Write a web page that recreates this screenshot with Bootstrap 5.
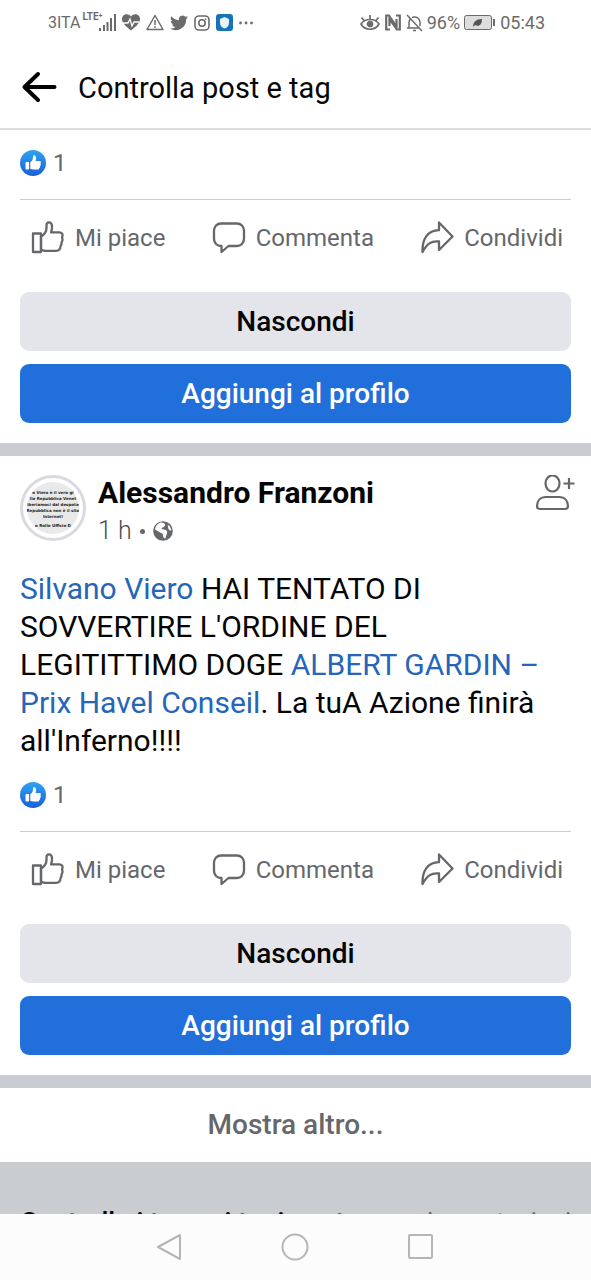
<!DOCTYPE html>
<html lang="it">
<head>
<meta charset="utf-8">
<meta name="viewport" content="width=device-width, initial-scale=1">
<title>Controlla post e tag</title>
<link rel="stylesheet" href="https://cdn.jsdelivr.net/npm/bootstrap@5.3.0/dist/css/bootstrap.min.css">
<style>
  body { font-family: Roboto, "Liberation Sans", sans-serif; color: #050505; background: #fff; }
  svg { display: block; flex: none; }
  .status-bar { height: 45px; font-size: 18px; line-height: 24px; color: #6b6b6b; padding: 0 46px 0 48px; }
  .status-icons { gap: 6px; }
  .status-name { font-size: 16px; }
  .status-lte { font-size: 10px; line-height: 12px; font-weight: 700; margin: 0 -4px 0 2px; }
  .title-bar { height: 85px; padding: 0 20px; gap: 20px; border-bottom: 2px solid #dcdde0; }
  .title-bar h1 { font-size: 29px; line-height: 36px; font-weight: 400; padding-top: 2px; }
  .icon-btn { background: none; border: 0; padding: 0; color: inherit; }
  .post { padding: 0 20px 20px; }
  .post-head { padding-top: 19px; margin-right: -4px; }
  .avatar-ring { width: 66px; height: 66px; border: 3px solid #d8dae0; padding: 4px; margin-right: 12px; }
  .author { font-size: 30px; line-height: 36px; font-weight: 700; color: #050505; text-decoration: none; }
  .meta { font-size: 25px; line-height: 32px; font-weight: 300; color: #4b4d51; gap: 8px; margin-top: 4px; }
  .meta-dot { width: 5px; height: 5px; background: #65676b; }
  .post-text { font-size: 30px; line-height: 38px; margin: 23px 0 2px; padding-right: 16px; }
  .post-text a { color: #2566b8; text-decoration: none; }
  .reactions { height: 70px; gap: 7px; font-size: 24px; line-height: 28px; color: #65676b; border-bottom: 1px solid #cbccd0; padding-bottom: 4px; }
  .post-actions { height: 92px; padding: 0 8px 16px 11px; }
  .post-actions button { font-size: 24px; line-height: 32px; color: #65676b; gap: 10px; }
  .button-stack { gap: 13px; }
  .btn-wide { height: 59px; border: 0; border-radius: 9px; font-size: 28px; line-height: 36px; font-weight: 500; padding: 0; }
  .btn-hide { --bs-btn-bg: #e4e5eb; --bs-btn-color: #050505; }
  .btn-add { --bs-btn-bg: #216fdb; --bs-btn-color: #fff; }
  .gap-bar { height: 13px; background: #c9ccd1; }
  .more { height: 74px; font-size: 28px; line-height: 36px; font-weight: 500; color: #65676b; }
  .next-section { height: 52px; background: #c9ccd1; padding: 43px 20px 0; overflow: hidden; line-height: 36px; white-space: nowrap; }
  .next-section h2 { font-size: 27px; line-height: 36px; font-weight: 500; margin: 0; }
  .next-section a { font-size: 25px; color: #65676b; text-decoration: none; }
  .system-nav { height: 66px; background: #fcfcfc; padding: 0 156px; color: #b5b5b5; }
</style>
</head>
<body>
<svg width="0" height="0" class="position-absolute" aria-hidden="true">
  <defs>
    <linearGradient id="blue" x1="0" y1="0" x2="0" y2="1"><stop offset="0" stop-color="#2ea2f3"/><stop offset="1" stop-color="#1a5fd8"/></linearGradient>
    <symbol id="reaction" viewBox="0 0 26 26">
      <circle cx="13" cy="13" r="13" fill="url(#blue)"/>
      <rect x="5.500" y="12" width="3.600" height="7.500" rx="1" fill="#fff"/>
      <path d="M10.300 12.300c1.800-1.200 2.600-2.700 2.600-4.800 0-1.800.5-2.300 1.300-2.300 1.600 0 2.200 1.700 1.700 4.300l-.3 1.600h3.600c2 0 2.100 1.800 1.200 2.500.8.900.5 2-.3 2.400.3 1-.2 1.700-.9 2 .1 1-.6 1.500-1.700 1.500h-3.700c-1.400 0-2.500-.3-3.500-.8z" fill="#fff"/>
    </symbol>
    <symbol id="like" viewBox="0 1.500 34 34"><g fill="none" stroke="#65676b" stroke-width="2.300" stroke-linejoin="round">
      <path d="M2 14h8v18.500H2z"/><path d="M10 17c3.500-2 5.500-5 5.500-8.500V6c0-4 4.500-4.200 5.300-.5.700 3-.1 5-.7 7.300h8.400c2.500 0 3.600 2 2.800 4-.3.900-.3 1.400 0 2.200.5 1.500 0 2.900-.8 3.900.3 1.400 0 2.500-.9 3.600-.2 2.700-1.700 4.800-4.500 4.800H14l-4-1z"/></g>
    </symbol>
    <symbol id="comment" viewBox="0 0.500 34 34"><path d="M9 3h16a7 7 0 0 1 7 7v8.500a7 7 0 0 1-7 7h-8.500L9.500 31.500v-6H9a7 7 0 0 1-7-7V10a7 7 0 0 1 7-7z" fill="none" stroke="#65676b" stroke-width="2.300" stroke-linejoin="round"/></symbol>
    <symbol id="share" viewBox="0 1 34 34"><path d="M19 2.500 32.500 16.500 19 30v-8.500c-8-.8-12 2.300-16.500 10.500C2 19 7.500 10.500 19 10.200z" fill="none" stroke="#65676b" stroke-width="2.300" stroke-linejoin="round"/></symbol>
  </defs>
</svg>

<div class="vh-100 d-flex flex-column overflow-hidden">
  <div class="status-bar d-flex align-items-center justify-content-between flex-shrink-0">
    <div class="status-icons d-flex align-items-center">
      <div class="d-flex align-items-center">
        <span class="status-name">3ITA</span>
        <span class="status-lte align-self-start">LTE⁺</span>
        <svg width="17" height="17" viewBox="0 0 17 17" fill="#6b6b6b"><path d="M0 14h2v3H0zM4 11h2v6H4zM7.500 8h2v9h-2zM11 4h2v13h-2zM15 0h2v17h-2z"/></svg>
      </div>
      <svg width="18" height="17" viewBox="0 0 18 17"><path d="M9 16.500C4 12.500 0 9 0 5c0-5 6-6.500 9-2.500C12 -1.500 18 0 18 5c0 4-4 7.500-9 11.500z" fill="#6b6b6b"/><path d="M1 9h5l2-4 2 7 2-4h5" fill="none" stroke="#fff" stroke-width="1.300"/></svg>
      <svg width="18" height="17" viewBox="0 0 18 17" fill="none" stroke="#6b6b6b" stroke-width="1.500"><path d="M9 1.500 17 15.500H1zM9 6v5M9 12.300v1.700" stroke-linejoin="round"/></svg>
      <svg width="18" height="16" viewBox="0 0 24 20" fill="#6b6b6b"><path d="M24 2.400c-.9.400-1.800.7-2.800.8 1-.6 1.800-1.600 2.200-2.700-1 .6-2 1-3.100 1.200A4.900 4.900 0 0 0 11.900 6.200C7.800 6 4.200 4 1.700.9c-1.300 2.200-.7 5.100 1.500 6.600-.8 0-1.600-.2-2.200-.6 0 2.300 1.600 4.400 3.900 4.900-.7.200-1.500.2-2.200.1.600 2 2.400 3.400 4.600 3.400A9.900 9.900 0 0 1 0 17.300a14 14 0 0 0 21.500-12.400c1-.7 1.800-1.600 2.500-2.500z"/></svg>
      <svg width="16" height="16" viewBox="0 0 16 16" fill="none" stroke="#6b6b6b" stroke-width="1.600"><rect x="1" y="1" width="14" height="14" rx="4"/><circle cx="8" cy="8" r="3.200"/><path d="M11.700 3.500v1.400"/></svg>
      <svg width="17" height="17" viewBox="0 0 17 17"><rect width="17" height="17" rx="3" fill="#1673b8"/><path d="M8.500 3 13 5v4c0 3-2 4.500-4.500 5.500C6 13.500 4 12 4 9V5z" fill="#e5f3fc"/></svg>
      <svg width="14" height="4" viewBox="0 0 14 4" fill="#6b6b6b"><circle cx="1.500" cy="2" r="1.400"/><circle cx="7" cy="2" r="1.400"/><circle cx="12.500" cy="2" r="1.400"/></svg>
    </div>
    <div class="d-flex align-items-center gap-1">
      <svg width="20" height="17" viewBox="0 0 20 17" fill="none" stroke="#6b6b6b" stroke-width="1.700"><path d="M1 10c4-6 14-6 18 0-4 7-14 7-18 0zM1.500 3.500l2.500 3M10 1v4M18.500 3.500l-2.500 3"/><circle cx="10" cy="10" r="2.500" fill="#6b6b6b"/></svg>
      <svg width="18" height="17" viewBox="0 0 18 17" fill="none" stroke="#6b6b6b" stroke-width="2.200"><path d="M6 15.500H2.200V1.500H5l7.500 11V5M12 1.500h3.800v14H13L5.500 5v7"/></svg>
      <svg width="17" height="18" viewBox="0 0 17 18" fill="none" stroke="#6b6b6b" stroke-width="1.500"><path d="M1 1l15 16M1 14h12M3 14V8l1-3M6 3.500C11 2 14 5 14 8v4M7 16.500h3"/></svg>
      <span>96%</span>
      <svg width="32" height="15" viewBox="0 0 32 15"><rect x=".5" y=".5" width="27" height="14" rx="2" fill="#ddd" stroke="#6b6b6b"/><path d="M30 4v7" stroke="#6b6b6b" stroke-width="2"/><path d="M9 12c0-5 3-8 9-8 0 6-3 8-7 6z" fill="#555"/></svg>
      <span>05:43</span>
    </div>
  </div>

  <header class="title-bar d-flex align-items-center flex-shrink-0">
    <button class="icon-btn" type="button" aria-label="Indietro"><svg width="38" height="32" viewBox="0 0 38 32" fill="none" stroke="#000" stroke-width="4" stroke-linecap="round" stroke-linejoin="round"><path d="M18 3 4.500 16 18 29M4.500 16H34.500"/></svg></button>
    <h1 class="m-0">Controlla post e tag</h1>
  </header>

  <main class="flex-grow-1 overflow-hidden">
    <article class="post">
      <div class="reactions d-flex align-items-center"><svg width="26" height="26"><use href="#reaction"/></svg><span>1</span></div>
      <div class="post-actions d-flex align-items-center justify-content-between">
        <button class="icon-btn d-flex align-items-center" type="button"><svg width="34" height="34"><use href="#like"/></svg>Mi piace</button>
        <button class="icon-btn d-flex align-items-center" type="button"><svg width="34" height="34"><use href="#comment"/></svg>Commenta</button>
        <button class="icon-btn d-flex align-items-center" type="button"><svg width="34" height="34"><use href="#share"/></svg>Condividi</button>
      </div>
      <div class="d-grid button-stack">
        <button class="btn btn-wide btn-hide" type="button">Nascondi</button>
        <button class="btn btn-wide btn-add" type="button">Aggiungi al profilo</button>
      </div>
    </article>

    <div class="gap-bar"></div>

    <article class="post">
      <div class="post-head d-flex align-items-start">
        <div class="avatar-ring rounded-circle flex-shrink-0">
          <svg width="52" height="52" viewBox="0 0 52 52" role="img" aria-label="Foto di Alessandro Franzoni">
            <circle cx="26" cy="26" r="26" fill="#e9e9e9"/>
            <g font-family="DejaVu Sans" font-size="4" font-weight="700" fill="#222" text-anchor="middle">
              <text x="26" y="12">o Viero è il vero gi</text><text x="26" y="18">lla Repubblica Venet</text><text x="26" y="24">liberiamoci dal despota.</text><text x="26" y="30">Repubblica non è il sito</text><text x="26" y="36">Internet!</text><text x="26" y="45">o Rollo Ufficio D</text>
            </g>
          </svg>
        </div>
        <div class="flex-grow-1">
          <a class="author d-block" href="#">Alessandro Franzoni</a>
          <div class="meta d-flex align-items-center"><span>1 h</span><span class="meta-dot rounded-circle"></span>
            <svg width="20" height="20" viewBox="0 0 20 20"><circle cx="10" cy="10" r="9.800" fill="#65676b"/><path d="M7.500 1.500c3 0 5 1 4.500 3-.5 1.800-3 1.500-3.500 3.500 2 .5 5 .5 5.500 2.500.5 2.500-1 3.500-1.500 7-3-.5-2-3-2.800-4.500C8.500 11.500 4.500 10.500 2 8.500c.5-3.500 2.500-6 5.500-7zM14.500 3.500C17 5 18.300 7.500 18.300 9.500c-1.500 0-2.500-.5-3-2s0-2.500-.8-4z" fill="#fff"/></svg>
          </div>
        </div>
        <button class="icon-btn" type="button" aria-label="Aggiungi amico"><svg width="40" height="40" viewBox="0 2 40 40" fill="none" stroke="#65676b" stroke-width="2.200"><ellipse cx="17.500" cy="10.500" rx="7" ry="8"/><path d="M2 33c0-5 3-9 9-9h13c6 0 9 4 9 9 0 2-1 3-3 3H5c-2 0-3-1-3-3zM34 5v11M28.500 10.500h11"/></svg></button>
      </div>
      <p class="post-text"><a href="#">Silvano Viero</a> HAI TENTATO DI SOVVERTIRE L'ORDINE DEL LEGITITTIMO DOGE <a href="#">ALBERT GARDIN – Prix Havel Conseil</a>. La tuA Azione finirà all'Inferno!!!!</p>
      <div class="reactions d-flex align-items-center"><svg width="26" height="26"><use href="#reaction"/></svg><span>1</span></div>
      <div class="post-actions d-flex align-items-center justify-content-between">
        <button class="icon-btn d-flex align-items-center" type="button"><svg width="34" height="34"><use href="#like"/></svg>Mi piace</button>
        <button class="icon-btn d-flex align-items-center" type="button"><svg width="34" height="34"><use href="#comment"/></svg>Commenta</button>
        <button class="icon-btn d-flex align-items-center" type="button"><svg width="34" height="34"><use href="#share"/></svg>Condividi</button>
      </div>
      <div class="d-grid button-stack">
        <button class="btn btn-wide btn-hide" type="button">Nascondi</button>
        <button class="btn btn-wide btn-add" type="button">Aggiungi al profilo</button>
      </div>
    </article>

    <div class="gap-bar"></div>
    <button class="icon-btn more w-100" type="button">Mostra altro...</button>
    <section class="next-section d-flex justify-content-between align-items-start">
      <h2>Controlla i tag sui tuoi post</h2><a href="#">Impostazioni</a>
    </section>
  </main>

  <nav class="system-nav d-flex align-items-center justify-content-between flex-shrink-0" aria-label="Sistema">
    <button class="icon-btn" type="button" aria-label="Indietro"><svg width="27" height="28" viewBox="0 0 27 28" fill="none" stroke="currentColor" stroke-width="2" stroke-linejoin="round"><path d="M24 2v24L2 14z"/></svg></button>
    <button class="icon-btn" type="button" aria-label="Home"><svg width="28" height="28" viewBox="0 0 28 28" fill="none" stroke="currentColor" stroke-width="2"><circle cx="14" cy="14" r="12.500"/></svg></button>
    <button class="icon-btn" type="button" aria-label="Recenti"><svg width="28" height="28" viewBox="0 0 28 28" fill="none" stroke="currentColor" stroke-width="2"><rect x="2" y="2" width="23" height="23" rx="1"/></svg></button>
  </nav>
</div>
<script src="https://cdn.jsdelivr.net/npm/bootstrap@5.3.0/dist/js/bootstrap.bundle.min.js"></script>
</body>
</html>
